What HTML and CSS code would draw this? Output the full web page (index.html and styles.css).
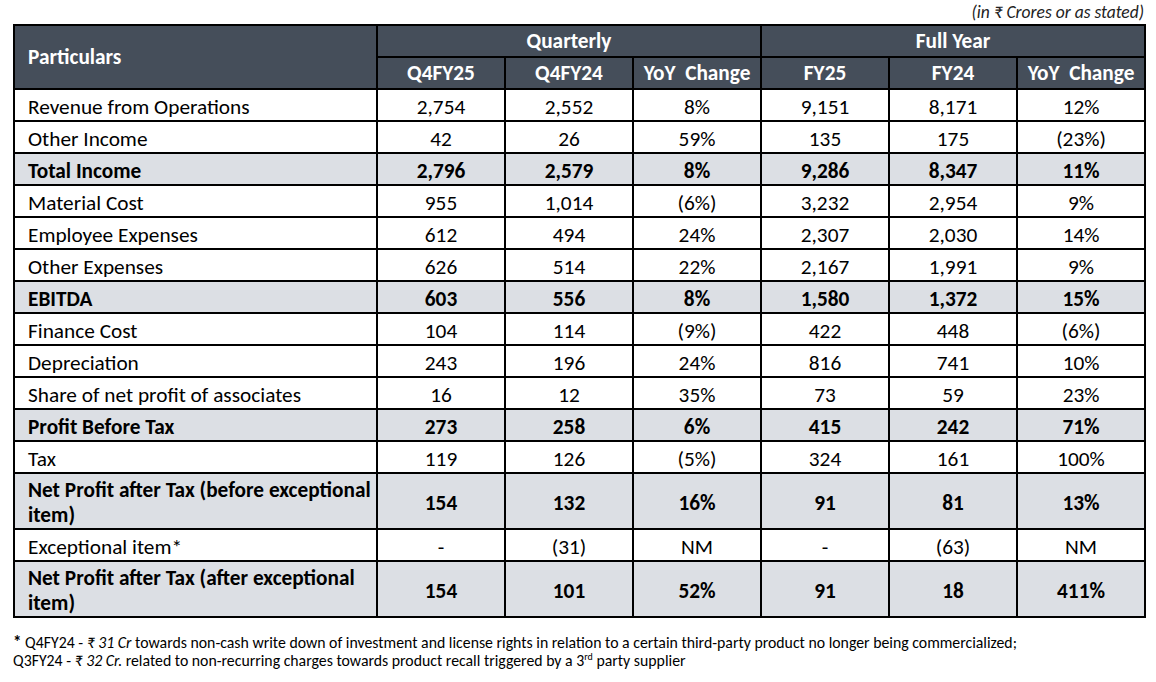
FILE: index.html
```html
<!DOCTYPE html>
<html lang="en">
<head>
  <meta charset="UTF-8">
  <title>Financial Summary</title>
  <link rel="stylesheet" href="styles.css">
</head>
<body>

<div class="page">
  <div class="unit-note">(in ₹ Crores or as stated)</div>

  <table class="results">
    <colgroup>
      <col class="col-label">
      <col class="col-num">
      <col class="col-num">
      <col class="col-num">
      <col class="col-num">
      <col class="col-num">
      <col class="col-num">
    </colgroup>
    <thead>
      <tr>
        <th class="label" rowspan="2">Particulars</th>
        <th colspan="3">Quarterly</th>
        <th colspan="3">Full Year</th>
      </tr>
      <tr>
        <th>Q4FY25</th>
        <th>Q4FY24</th>
        <th>YoY&nbsp; Change</th>
        <th>FY25</th>
        <th>FY24</th>
        <th>YoY&nbsp; Change</th>
      </tr>
    </thead>
    <tbody>
      <tr>
        <td class="label">Revenue from Operations</td>
        <td>2,754</td><td>2,552</td><td>8%</td>
        <td>9,151</td><td>8,171</td><td>12%</td>
      </tr>
      <tr>
        <td class="label">Other Income</td>
        <td>42</td><td>26</td><td>59%</td>
        <td>135</td><td>175</td><td>(23%)</td>
      </tr>
      <tr class="total">
        <td class="label">Total Income</td>
        <td>2,796</td><td>2,579</td><td>8%</td>
        <td>9,286</td><td>8,347</td><td>11%</td>
      </tr>
      <tr>
        <td class="label">Material Cost</td>
        <td>955</td><td>1,014</td><td>(6%)</td>
        <td>3,232</td><td>2,954</td><td>9%</td>
      </tr>
      <tr>
        <td class="label">Employee Expenses</td>
        <td>612</td><td>494</td><td>24%</td>
        <td>2,307</td><td>2,030</td><td>14%</td>
      </tr>
      <tr>
        <td class="label">Other Expenses</td>
        <td>626</td><td>514</td><td>22%</td>
        <td>2,167</td><td>1,991</td><td>9%</td>
      </tr>
      <tr class="total">
        <td class="label">EBITDA</td>
        <td>603</td><td>556</td><td>8%</td>
        <td>1,580</td><td>1,372</td><td>15%</td>
      </tr>
      <tr>
        <td class="label">Finance Cost</td>
        <td>104</td><td>114</td><td>(9%)</td>
        <td>422</td><td>448</td><td>(6%)</td>
      </tr>
      <tr>
        <td class="label">Depreciation</td>
        <td>243</td><td>196</td><td>24%</td>
        <td>816</td><td>741</td><td>10%</td>
      </tr>
      <tr>
        <td class="label">Share of net profit of associates</td>
        <td>16</td><td>12</td><td>35%</td>
        <td>73</td><td>59</td><td>23%</td>
      </tr>
      <tr class="total">
        <td class="label">Profit Before Tax</td>
        <td>273</td><td>258</td><td>6%</td>
        <td>415</td><td>242</td><td>71%</td>
      </tr>
      <tr>
        <td class="label">Tax</td>
        <td>119</td><td>126</td><td>(5%)</td>
        <td>324</td><td>161</td><td>100%</td>
      </tr>
      <tr class="total tall">
        <td class="label">Net Profit after Tax (before exceptional item)</td>
        <td>154</td><td>132</td><td>16%</td>
        <td>91</td><td>81</td><td>13%</td>
      </tr>
      <tr>
        <td class="label">Exceptional item*</td>
        <td>-</td><td>(31)</td><td>NM</td>
        <td>-</td><td>(63)</td><td>NM</td>
      </tr>
      <tr class="total tall">
        <td class="label">Net Profit after Tax (after exceptional item)</td>
        <td>154</td><td>101</td><td>52%</td>
        <td>91</td><td>18</td><td>411%</td>
      </tr>
    </tbody>
  </table>

  <div class="footnote">
    <p><b>*</b> Q4FY24 - <i>₹ 31 Cr</i> towards non-cash write down of investment and license rights in relation to a certain third-party product no longer being commercialized;</p>
    <p>Q3FY24 - <i>₹ 32 Cr.</i> related to non-recurring charges towards product recall triggered by a 3<sup>rd</sup> party supplier</p>
  </div>
</div>

</body>
</html>
```

FILE: styles.css
```css
body {
  margin: 0;
  padding: 0;
  background-color: #ffffff;
  font-family: Carlito, Lato, "Liberation Sans", sans-serif;
  color: #000000;
}

.page {
  width: 1131px;
  padding: 2px 0 0 13px;
}

.unit-note {
  text-align: right;
  font-style: italic;
  font-size: 17.5px;
  line-height: 20px;
  height: 22px;
  color: #222;
}

.results {
  width: 1131px;
  table-layout: fixed;
  border-collapse: collapse;
  border: 2px solid #000;
  font-size: 21.3px;
}

.col-label {
  width: 363px;
}

.col-num {
  width: 128px;
}

.results th,
.results td {
  border: 2px solid #000;
  text-align: center;
  padding: 0 2px;
  height: 30px;
  line-height: 23px;
}

.results td {
  padding-top: 4px;
  height: 26px;
}

.results th {
  background-color: #454e5a;
  color: #ffffff;
  font-weight: bold;
}

.results .label {
  text-align: left;
  padding-left: 13px;
}

.results tr.total td {
  background-color: #dcdfe4;
  font-weight: bold;
}

.results tr.tall td {
  height: 48px;
}

.results tr.tall td.label {
  padding-right: 0;
  line-height: 25px;
}

.footnote {
  margin-top: 16px;
  font-size: 15.8px;
  line-height: 18px;
}

.footnote p {
  margin: 0;
}

.footnote b {
  font-size: 17px;
}

.footnote sup {
  font-size: 10px;
  line-height: 0;
}
```
